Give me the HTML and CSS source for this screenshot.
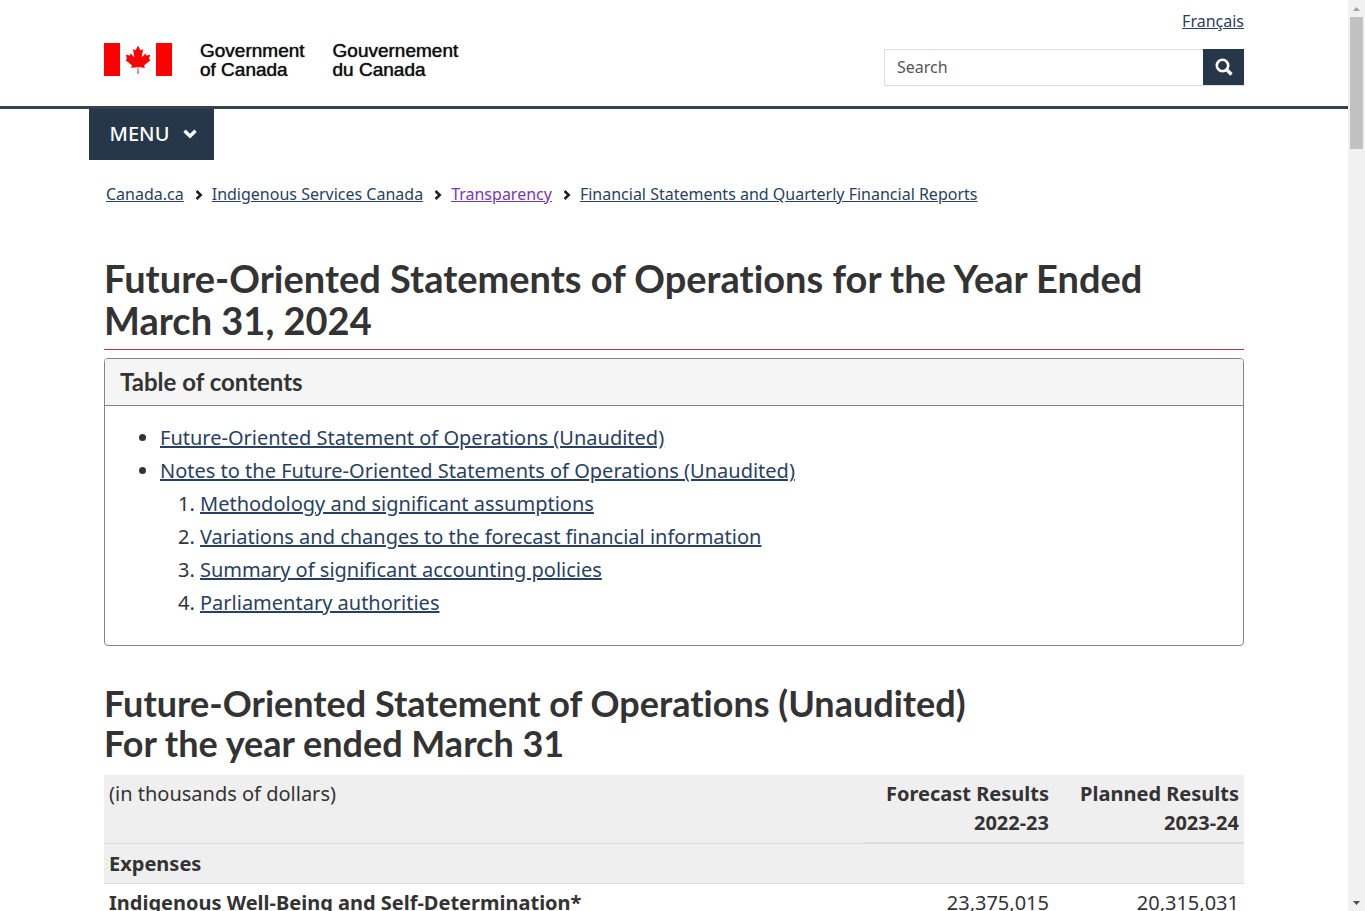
FILE: index.html
```html
<!DOCTYPE html>
<html lang="en">
<head>
  <meta charset="UTF-8" />
  <meta name="viewport" content="width=device-width, initial-scale=1" />
  <title>Future-Oriented Statements of Operations for the Year Ended March 31, 2024</title>
  <link rel="stylesheet" href="styles.css">
</head>
<body>

<div class="page">
  <header class="site-header">
    <div class="container header-row">
      <a class="brand" href="#">
        <svg class="flag" viewBox="0 0 68 33" aria-hidden="true">
          <path fill="#f00" d="M0 0h16v33H0zM52 0h16v33H52z"/>
          <path fill="#f00" transform="translate(1.4 -.3) scale(.0068 .007)" d="m4890 4430-45-863a95 95 0 0 1 111-98l859 151-116-320a65 65 0 0 1 20-73l941-762-212-99a65 65 0 0 1-34-79l186-572-542 115a65 65 0 0 1-73-38l-105-247-423 454a65 65 0 0 1-111-57l204-1052-327 189a65 65 0 0 1-91-27l-332-652-332 652a65 65 0 0 1-91 27l-327-189 204 1052a65 65 0 0 1-111 57l-423-454-105 247a65 65 0 0 1-73 38l-542-115 186 572a65 65 0 0 1-34 79l-212 99 941 762a65 65 0 0 1 20 73l-116 320 859-151a95 95 0 0 1 111 98l-45 863z"/>
        </svg>
        <span class="brand-text">Government<br>of Canada</span>
        <span class="brand-text" lang="fr">Gouvernement<br>du Canada</span>
      </a>
      <div class="header-tools">
        <a class="lang" href="#" lang="fr">Français</a>
        <form class="search" role="search">
          <input class="search-input" type="search" placeholder="Search" aria-label="Search">
          <button class="search-btn" type="button" aria-label="Search">
            <svg width="18" height="18" viewBox="0 0 18 18" fill="none" stroke="#fff" aria-hidden="true">
              <circle cx="7.5" cy="7.5" r="5.7" stroke-width="2.6"/>
              <path d="M11.5 11.5l5 5" stroke-width="3.4"/>
            </svg>
          </button>
        </form>
      </div>
    </div>
  </header>

  <nav class="container menu" aria-label="Menu">
    <button class="menu-btn" type="button">MENU
      <svg width="14" height="10" viewBox="0 0 14 10" fill="none" stroke="#fff" stroke-width="3.4" aria-hidden="true"><path d="M1.5 1.8L7 7.2l5.500-5.400"/></svg>
    </button>
  </nav>

  <nav class="container" aria-label="You are here">
    <ol class="breadcrumb">
      <li><a href="#">Canada.ca</a></li>
      <li><svg class="sep" viewBox="0 0 8 10" aria-hidden="true"><path d="M1.500 1L5.700 5L1.500 9"/></svg><a href="#">Indigenous Services Canada</a></li>
      <li><svg class="sep" viewBox="0 0 8 10" aria-hidden="true"><path d="M1.500 1L5.700 5L1.500 9"/></svg><a class="visited" href="#">Transparency</a></li>
      <li><svg class="sep" viewBox="0 0 8 10" aria-hidden="true"><path d="M1.500 1L5.700 5L1.500 9"/></svg><a href="#">Financial Statements and Quarterly Financial Reports</a></li>
    </ol>
  </nav>

  <main class="container">
    <h1>Future-Oriented Statements of Operations for the Year Ended March 31, 2024</h1>

    <section class="panel">
      <h2 class="panel-title">Table of contents</h2>
      <ul class="toc">
        <li><a href="#statement">Future-Oriented Statement of Operations (Unaudited)</a></li>
        <li><a href="#">Notes to the Future-Oriented Statements of Operations (Unaudited)</a>
          <ol>
            <li><a href="#">Methodology and significant assumptions</a></li>
            <li><a href="#">Variations and changes to the forecast financial information</a></li>
            <li><a href="#">Summary of significant accounting policies</a></li>
            <li><a href="#">Parliamentary authorities</a></li>
          </ol>
        </li>
      </ul>
    </section>

    <h2 id="statement">Future-Oriented Statement of Operations (Unaudited)<br>For the year ended March 31</h2>

    <table class="statement">
      <thead>
        <tr>
          <td>(in thousands of dollars)</td>
          <th class="num" scope="col">Forecast Results<br>2022-23</th>
          <th class="num" scope="col">Planned Results<br>2023-24</th>
        </tr>
      </thead>
      <tbody>
        <tr class="group">
          <th colspan="3" scope="colgroup">Expenses</th>
        </tr>
        <tr>
          <th scope="row">Indigenous Well-Being and Self-Determination*</th>
          <td class="num">23,375,015</td>
          <td class="num">20,315,031</td>
        </tr>
      </tbody>
    </table>
  </main>
</div>

<div class="scrollbar" aria-hidden="true">
  <svg class="arrow" viewBox="0 0 17 17"><path fill="#a3a3a3" d="M5 11l3.500-4 3.500 4z"/></svg>
  <div class="track"><div class="thumb"></div></div>
  <svg class="arrow" viewBox="0 0 17 17"><path fill="#505050" d="M5 7l3.500 4L12 7z"/></svg>
</div>

</body>
</html>
```
FILE: styles.css
```css
* {
  box-sizing: border-box;
}

body {
  margin: 0;
  height: 100vh;
  display: grid;
  grid-template-columns: minmax(0, 1fr) 17px;
  overflow: hidden;
  font-family: "Noto Sans", sans-serif;
  font-size: 20px;
  line-height: 33px;
  color: #333;
  background: #fff;
}

a {
  color: #284162;
}

a.visited {
  color: #7834bc;
}

.page {
  overflow: hidden;
}

.container {
  max-width: 1170px;
  margin: 0 auto;
  padding: 0 15px;
}

/* header */
.site-header {
  border-bottom: 3px solid #38414d;
}

.header-row {
  display: flex;
  justify-content: space-between;
  padding-top: 9px;
  padding-bottom: 20px;
}

.brand {
  display: flex;
  align-items: flex-start;
  gap: 28px;
  padding-top: 32px;
  color: #111;
  text-decoration: none;
}

.flag {
  width: 68px;
  height: 33px;
  margin-top: 2px;
}

.brand-text {
  font-family: "Liberation Sans", Arial, sans-serif;
  font-size: 19px;
  line-height: 19px;
  text-shadow: 0 0 1px #111;
}

.header-tools {
  display: flex;
  flex-direction: column;
  align-items: flex-end;
  gap: 16px;
  width: 360px;
  font-size: 16px;
  line-height: 24px;
}

.search {
  display: flex;
  width: 100%;
  height: 37px;
}

.search-input {
  flex: 1;
  min-width: 0;
  padding: 0 12px 2px;
  border: 1px solid #ddd;
  border-right: 0;
  border-radius: 0;
  font: inherit;
  background: #fff;
  appearance: none;
}

.search-input::placeholder {
  color: #555;
}

.search-btn {
  display: flex;
  align-items: center;
  justify-content: center;
  width: 41px;
  padding: 0;
  border: 0;
  border-bottom: 1px solid #ddd;
  background: #26374a;
}

/* menu and breadcrumb */
.menu {
  padding: 0;
}

.menu-btn {
  display: flex;
  align-items: center;
  justify-content: center;
  gap: 14px;
  width: 125px;
  height: 51px;
  padding: 0 0 2px 4px;
  border: 0;
  background: #26374a;
  color: #fff;
  font: 500 20px "Noto Sans", sans-serif;
}

.breadcrumb {
  display: flex;
  flex-wrap: wrap;
  margin: 0;
  padding: 22px 2px 0;
  list-style: none;
  font-size: 16px;
  line-height: 24px;
}

.sep {
  width: 8px;
  height: 10px;
  margin: 0 9px 0 11px;
  fill: none;
  stroke: #222;
  stroke-width: 2.6;
}

/* headings */
h1, h2 {
  font-family: Lato, sans-serif;
  font-weight: 700;
  font-variant-ligatures: none;
}

h1 {
  margin: 51px 0 8px;
  padding-bottom: 8px;
  border-bottom: 1px solid #af3c43;
  font-size: 38px;
  line-height: 42px;
}

h2 {
  margin: 37px 0 12px;
  font-size: 36px;
  line-height: 40px;
}

/* table of contents */
.panel {
  border: 1px solid #848484;
  border-radius: 4px;
}

.panel-title {
  margin: 0;
  padding: 10px 15px;
  border-bottom: 1px solid #848484;
  border-radius: 3px 3px 0 0;
  background: #f5f5f5;
  font-size: 24px;
  line-height: 26px;
}

.toc {
  margin: 0;
  padding: 15px 15px 26px 55px;
}

.toc ol {
  margin: 0;
  padding-left: 40px;
}

/* statement table */
.statement {
  width: 100%;
  border-collapse: collapse;
  line-height: 29px;
}

.statement th,
.statement td {
  padding: 4px 5px 5px;
  border-bottom: 1px solid #ddd;
  text-align: left;
  vertical-align: top;
}

.statement .num {
  width: 190px;
  text-align: right;
}

.statement thead,
.statement .group {
  background: #efefef;
}

.statement .group th {
  padding-top: 5px;
}

.statement thead th {
  border-bottom-width: 2px;
}

/* scrollbar */
.scrollbar {
  display: flex;
  flex-direction: column;
  background: #f1f1f1;
}

.arrow {
  width: 17px;
  height: 17px;
}

.track {
  flex: 1;
  padding: 0 2px;
}

.thumb {
  height: 15%;
  background: #c1c1c1;
}
```
